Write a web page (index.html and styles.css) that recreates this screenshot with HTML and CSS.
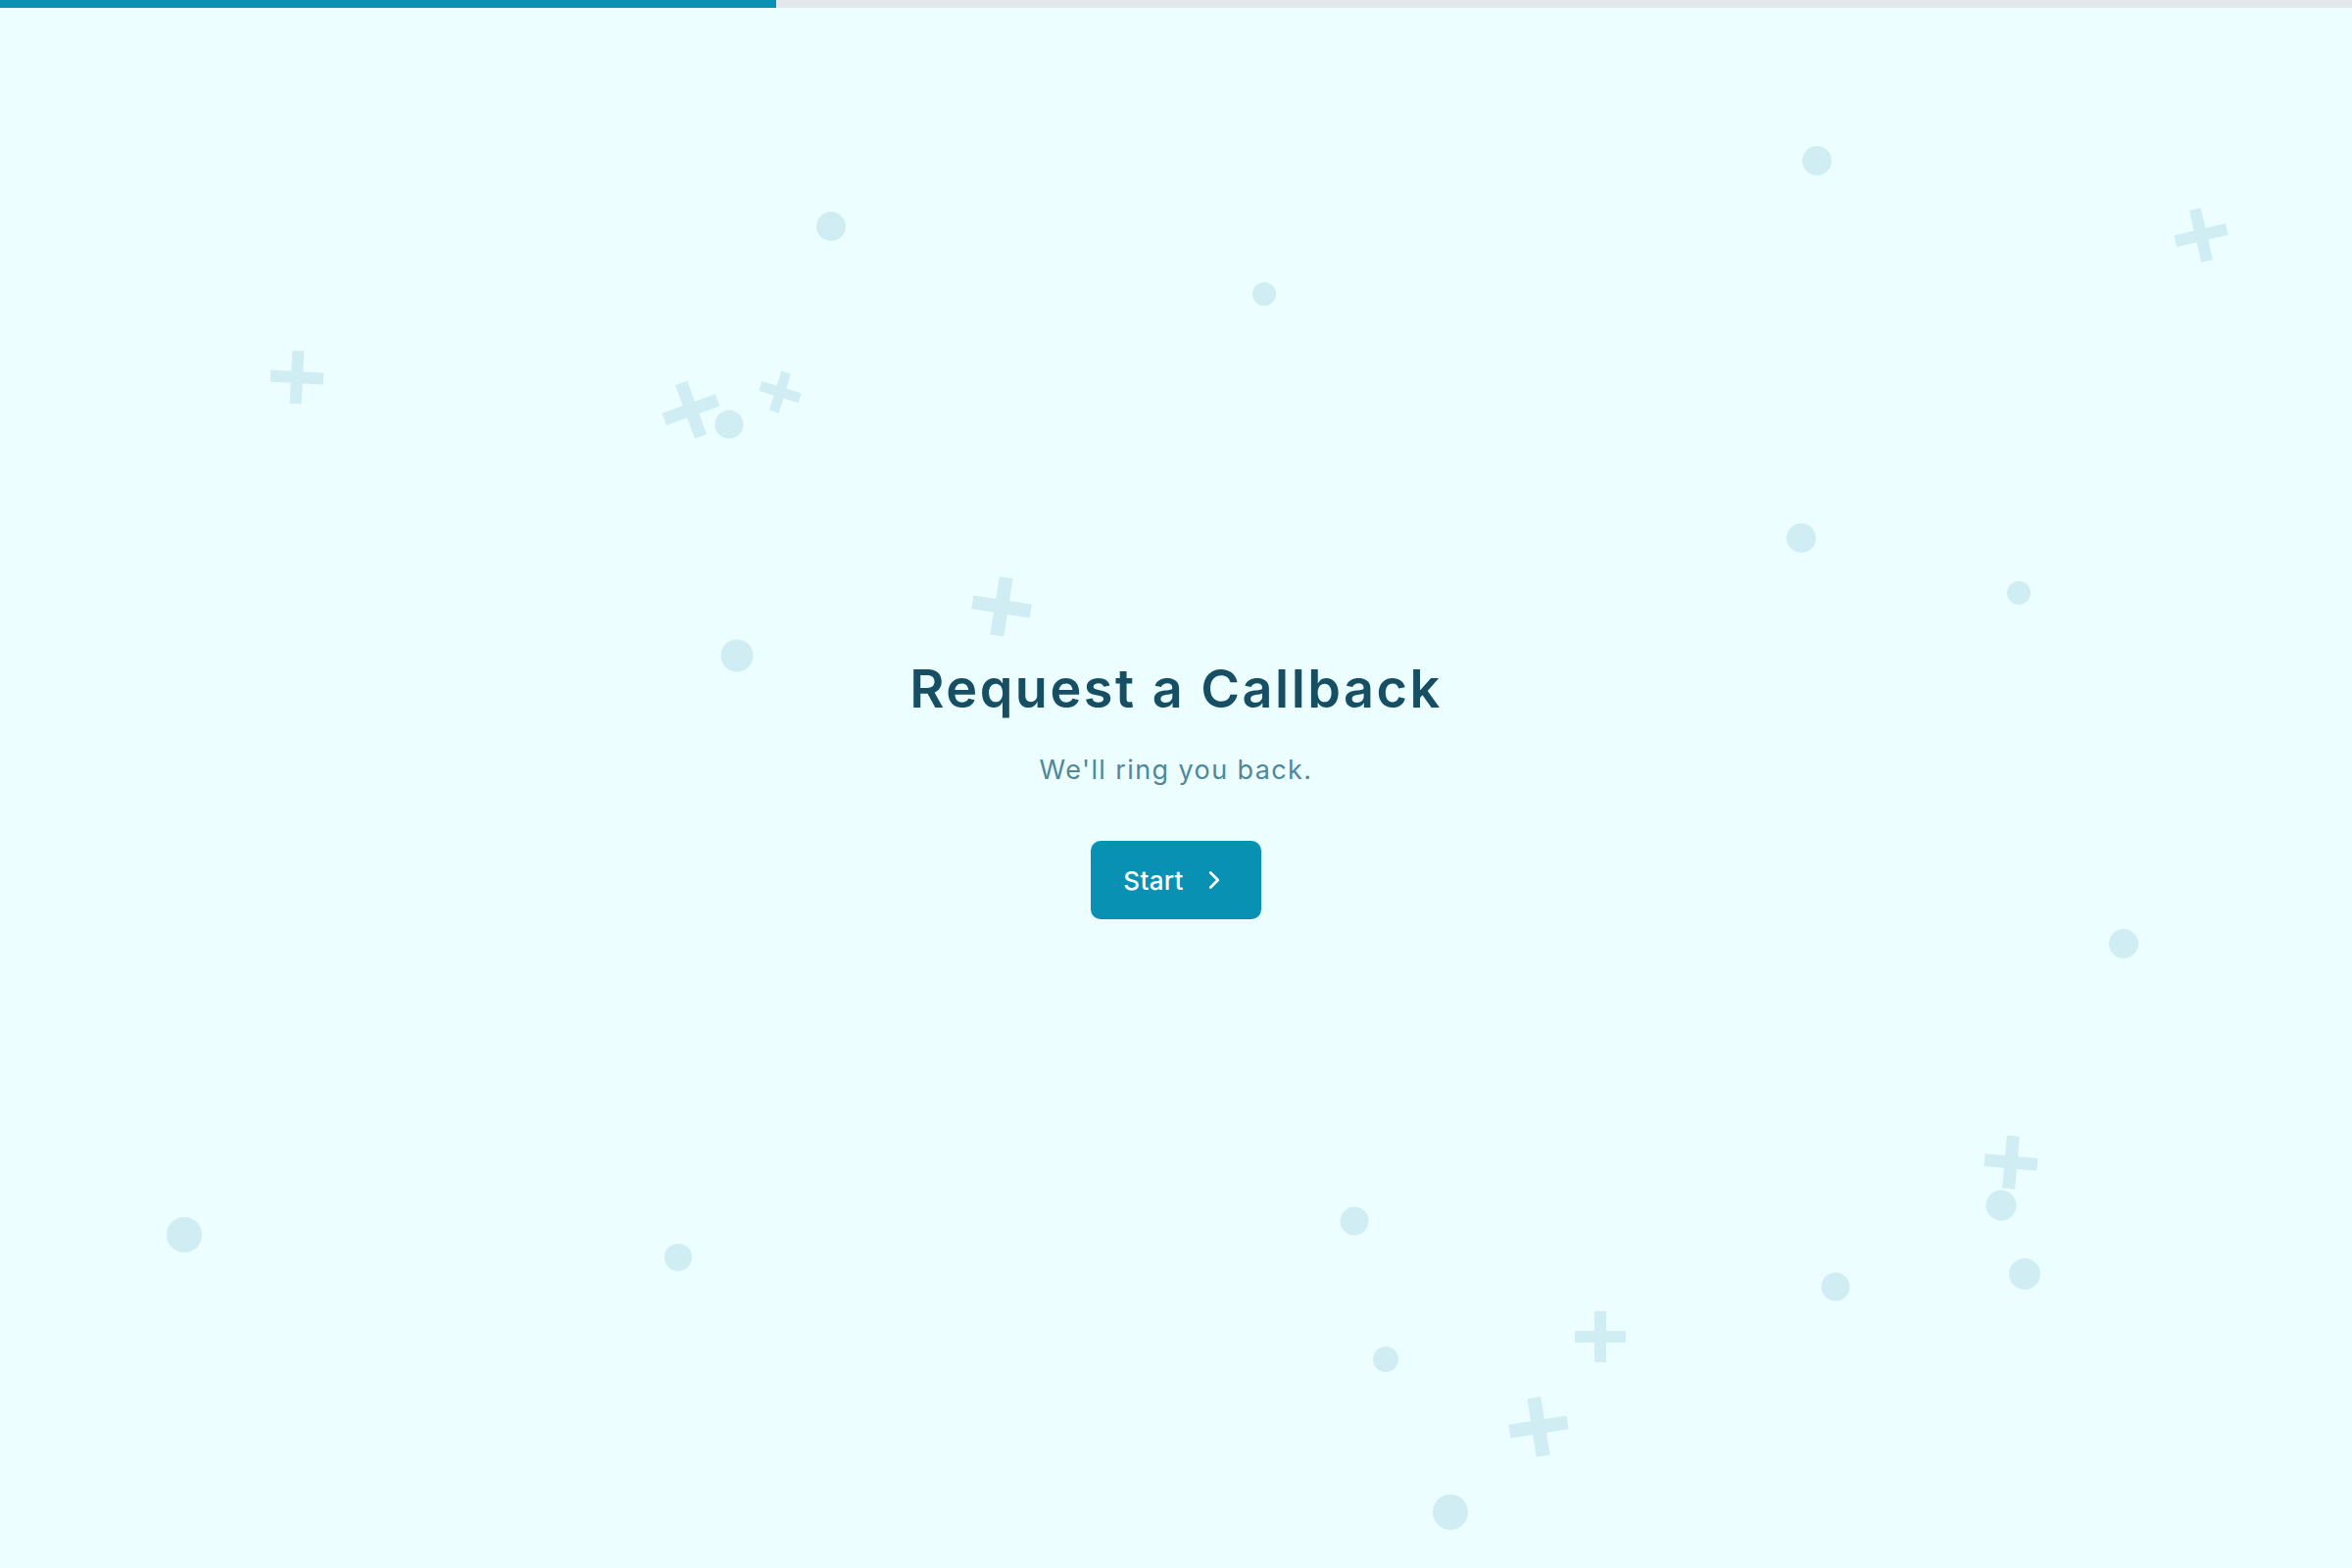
FILE: index.html
```html
<!DOCTYPE html>
<html lang="en">
<head>
<meta charset="utf-8">
<title>Request a Callback</title>
<link rel="stylesheet" href="styles.css">
</head>
<body>
<div class="page">
  <div class="progress"><div class="progress-fill" style="width:33%"></div></div>
  <svg class="decor" viewBox="0 0 2400 1600" aria-hidden="true">
    <g class="dots">
      <circle cx="848" cy="231" r="15"/>
      <circle cx="1290" cy="300" r="12"/>
      <circle cx="1854" cy="164" r="15"/>
      <circle cx="744" cy="433" r="14.5"/>
      <circle cx="1838" cy="549" r="15"/>
      <circle cx="2060" cy="605" r="12"/>
      <circle cx="752" cy="669" r="16.5"/>
      <circle cx="2167" cy="963" r="15"/>
      <circle cx="188" cy="1260" r="18"/>
      <circle cx="692" cy="1283" r="14"/>
      <circle cx="1382" cy="1246" r="14.5"/>
      <circle cx="1414" cy="1387" r="13"/>
      <circle cx="1873" cy="1313" r="14.5"/>
      <circle cx="2042" cy="1230" r="15.5"/>
      <circle cx="2066" cy="1300" r="16"/>
      <circle cx="1480" cy="1543" r="18"/>
    </g>
    <g class="pluses">
      <g transform="translate(303 385) rotate(3)"><rect x="-27" y="-6" width="54" height="12"/><rect x="-6" y="-27" width="12" height="54"/></g>
      <g transform="translate(705 418) rotate(-20)"><rect x="-29" y="-6.5" width="58" height="13"/><rect x="-6.5" y="-29" width="13" height="58"/></g>
      <g transform="translate(796 400) rotate(17)"><rect x="-21" y="-5" width="42" height="10"/><rect x="-5" y="-21" width="10" height="42"/></g>
      <g transform="translate(1022 619) rotate(9)"><rect x="-30" y="-7" width="60" height="14"/><rect x="-7" y="-30" width="14" height="60"/></g>
      <g transform="translate(2246 240) rotate(-13)"><rect x="-27" y="-6" width="54" height="12"/><rect x="-6" y="-27" width="12" height="54"/></g>
      <g transform="translate(2052 1186) rotate(5)"><rect x="-27" y="-6.5" width="54" height="13"/><rect x="-6.5" y="-27" width="13" height="54"/></g>
      <g transform="translate(1633 1364) rotate(0)"><rect x="-26" y="-6" width="52" height="12"/><rect x="-6" y="-26" width="12" height="52"/></g>
      <g transform="translate(1570 1456) rotate(-9)"><rect x="-30" y="-7" width="60" height="14"/><rect x="-7" y="-30" width="14" height="60"/></g>
    </g>
  </svg>
  <main class="stage">
    <section class="intro">
      <h1 class="title">Request a Callback</h1>
      <p class="subtitle">We'll ring you back.</p>
      <button class="start-btn" type="button">
        <span>Start</span>
        <svg class="chevron" viewBox="0 0 24 24" aria-hidden="true"><path d="m9 18 6-6-6-6"/></svg>
      </button>
    </section>
  </main>
</div>
</body>
</html>
```
FILE: styles.css
```css
html, body {
  margin: 0;
  padding: 0;
}

body {
  background: #ecfeff;
  font-family: Inter, "Noto Sans", "Liberation Sans", sans-serif;
  overflow: hidden;
}

.page {
  position: relative;
  height: 100vh;
  display: flex;
  flex-direction: column;
}

.progress {
  height: 8px;
  background: #e3e8ec;
  flex: none;
  position: relative;
  z-index: 1;
}

.progress-fill {
  height: 100%;
  background: #0891b2;
}

.decor {
  position: absolute;
  inset: 0;
  width: 100%;
  height: 100%;
  pointer-events: none;
}

.decor .dots circle,
.decor .pluses rect {
  fill: #cfedf2;
}

.stage {
  position: relative;
  flex: 1;
  display: flex;
  align-items: center;
  justify-content: center;
}

.intro {
  display: flex;
  flex-direction: column;
  align-items: center;
  text-align: center;
}

.title {
  margin: 0;
  font-size: 54px;
  line-height: 65px;
  font-weight: 600;
  color: #164e63;
  letter-spacing: 2.5px;
}

.subtitle {
  margin: 33px 0 0;
  font-size: 27px;
  line-height: 35px;
  font-weight: 400;
  color: #4f8899;
  letter-spacing: 1.4px;
}

.start-btn {
  margin-top: 55px;
  height: 80px;
  padding: 0 33px 0 33px;
  display: flex;
  align-items: center;
  gap: 16px;
  border: none;
  border-radius: 10px;
  background: #0891b2;
  color: #ffffff;
  font-family: inherit;
  font-size: 26px;
  font-weight: 500;
  letter-spacing: 0.3px;
  cursor: pointer;
}

.chevron {
  width: 30px;
  height: 30px;
  fill: none;
  stroke: #ffffff;
  stroke-width: 2.2;
  stroke-linecap: round;
  stroke-linejoin: round;
}
```
